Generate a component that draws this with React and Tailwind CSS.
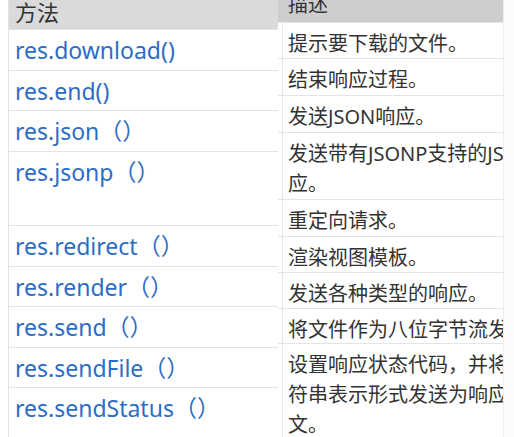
const methods = [
  { name: 'res.download()', h: 'h-[41px]' },
  { name: 'res.end()', h: 'h-[40px]' },
  { name: 'res.json（）', h: 'h-[41px]' },
  { name: 'res.jsonp（）', h: 'h-[74px]' },
  { name: 'res.redirect（）', h: 'h-[41px]' },
  { name: 'res.render（）', h: 'h-[40px]' },
  { name: 'res.send（）', h: 'h-[41px]' },
  { name: 'res.sendFile（）', h: 'h-[40px]' },
  { name: 'res.sendStatus（）', h: 'h-[60px]' },
];

const descs = [
  { lines: ['提示要下载的文件。'], h: 'h-[36px]' },
  { lines: ['结束响应过程。'], h: 'h-[37px]' },
  { lines: ['发送JSON响应。'], h: 'h-[37px]' },
  { lines: ['发送带有JSONP支持的JSON响', '应。'], h: 'h-[67px]' },
  { lines: ['重定向请求。'], h: 'h-[37px]' },
  { lines: ['渲染视图模板。'], h: 'h-[36px]' },
  { lines: ['发送各种类型的响应。'], h: 'h-[36px]' },
  { lines: ['将文件作为八位字节流发送。'], h: 'h-[35px]' },
  { lines: ['设置响应状态代码，并将其字', '符串表示形式发送为响应正', '文。'], h: 'h-[100px]' },
];

const font = { fontFamily: '"Noto Sans", "Noto Sans CJK SC", sans-serif' };

export default function App() {
  return (
    <div className="flex h-[437px] w-[514px] overflow-hidden bg-white" style={font}>
      {/* left table: methods */}
      <div className="ml-[8px] flex w-[270px] flex-col border-l border-[#e2e2e2]">
        <div className="flex h-[29px] shrink-0 items-end bg-[#dadada] pb-[2px] pl-[6px]">
          <span className="text-[22px] leading-[30px] text-[#333]">方法</span>
        </div>
        {methods.map((m) => (
          <div key={m.name} className={`${m.h} shrink-0 border-t border-[#e4e4e4] pl-[6px]`}>
            <span className="whitespace-nowrap text-[23px] leading-[40px] text-[#2e6cc6]">{m.name}</span>
          </div>
        ))}
      </div>

      {/* right table: descriptions, cropped */}
      <div className="flex w-[225px] flex-col overflow-hidden bg-white">
        <div className="flex h-[22px] shrink-0 items-end overflow-hidden bg-[#cdcdcd] pb-[2px] pl-[10px]">
          <span className="text-[20px] leading-[30px] text-[#333]">描述</span>
        </div>
        {descs.map((d) => (
          <div key={d.lines[0]} className={`${d.h} shrink-0 border-t border-[#e4e4e4]`}>
            <div className="ml-[4px] h-full border-l border-[#e6e6e6] pl-[5px] pt-[6px]">
              {d.lines.map((l) => (
                <div key={l} className="whitespace-nowrap text-[20px] leading-[30px] text-[#333]">{l}</div>
              ))}
            </div>
          </div>
        ))}
      </div>

      <div className="w-[11px] border-l border-[#eeeeee] bg-[#fbfbfb]" />
    </div>
  );
}
